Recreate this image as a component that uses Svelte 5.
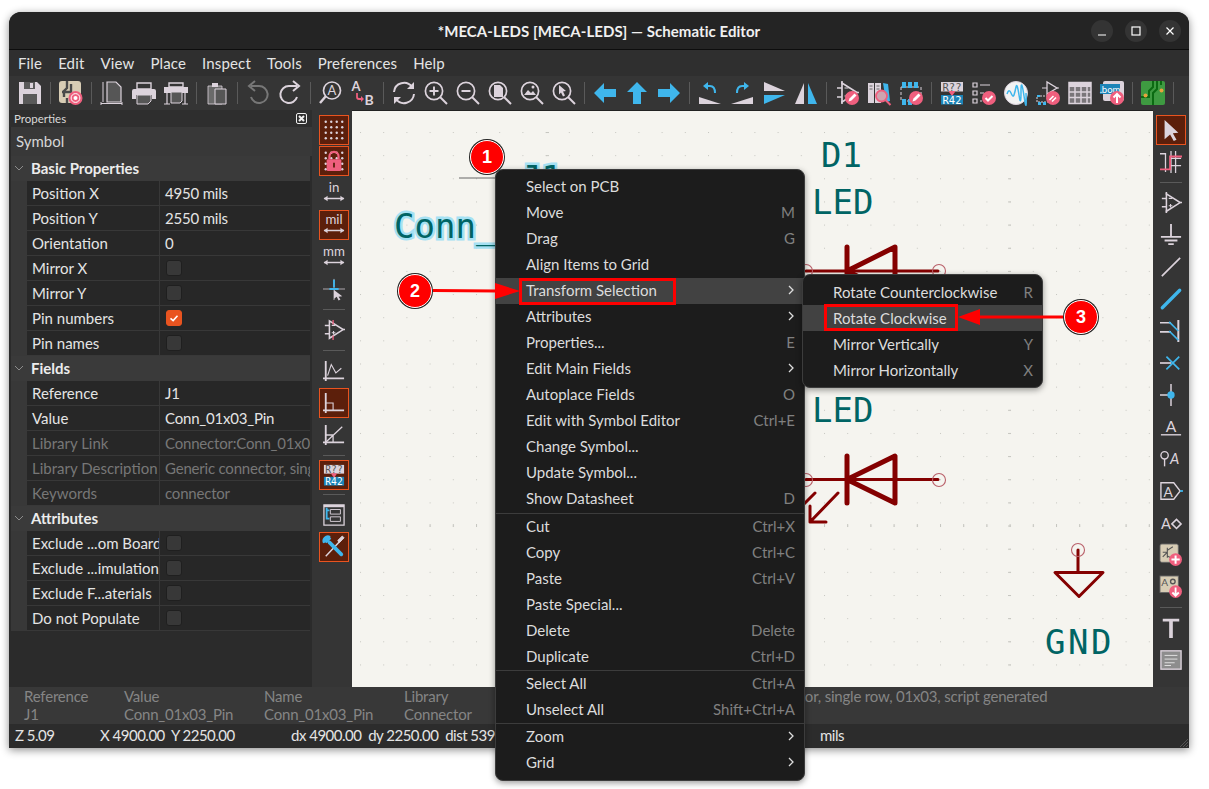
<script lang="ts">
  const L = "#dcd3dc";
  const B = "#3fb6ec";
  const P = "#ef5f7e";
  const G = "#565656";
  const SANS = "font-family='Lato,sans-serif'";

  // pink round badge used on the edit / check / add icons
  const badge = (inner: string, cx = 17, cy = 17, r = 7) =>
    `<circle cx="${cx}" cy="${cy}" r="${r}" fill="${P}"/>${inner}`;
  const pencil = `<path d="M13.5 20.5l1-3 5-5 2 2-5 5z" fill="#fff"/>`;
  const check = `<path d="M13.5 17l2.5 2.5 4.5-4.5" stroke="#fff" stroke-width="2" fill="none"/>`;
  const mag = (inner: string) =>
    `<circle cx="10" cy="10" r="8.6" fill="none" stroke="${L}" stroke-width="1.7"/><path d="M16 16l7 7" stroke="${L}" stroke-width="2"/>${inner}`;
  const opamp = (c = L) =>
    `<path d="M7 2v19l15-9.5z" fill="none" stroke="${c}" stroke-width="1.7"/><path d="M2 7h5M2 16h5M22 11.5h2M7 0v3M7 20v3" stroke="${c}" stroke-width="1.6"/><path d="M9.5 7h4M9.5 15h4M11.5 13v4" stroke="${c}" stroke-width="1.2"/>`;
  const units = (t: string) =>
    `<text x="12" y="11" text-anchor="middle" font-size="14.5" ${SANS} fill="${L}">${t}</text><path d="M1 18h22" stroke="${L}" stroke-width="1.6"/><path d="M5 15l-4 3 4 3zM19 15l4 3-4 3z" fill="${L}"/>`;
  const annotate = `<rect x="1" y="1" width="22" height="9.5" fill="${L}"/><text x="12" y="9.6" text-anchor="middle" font-size="10.5" font-family="DejaVu Sans Mono,monospace" fill="#555">R??</text><rect x="1" y="14" width="22" height="9.5" fill="#1b84b8"/><text x="12" y="22.8" text-anchor="middle" font-size="10.5" font-family="DejaVu Sans Mono,monospace" fill="#fff">R42</text><path d="M9 10h6v1l-3 4-3-4z" fill="${P}"/>`;
  const axes = `<path d="M3 1v22M0 20h23" stroke="${L}" stroke-width="2"/>`;
  const dotGrid = [3, 9, 15, 21]
    .flatMap(y => [3, 9, 15, 21].map(x => `<circle cx="${x}" cy="${y}" r="1.3" fill="${L}"/>`))
    .join("");

  const icons: Record<string, string> = {
    save: `<path d="M1 1h18l4 4v18H1z" fill="${L}"/><rect x="6" y="1" width="11" height="7" fill="#5a5a5a"/><rect x="12" y="2" width="3" height="5" fill="${L}"/><rect x="5" y="13" width="14" height="10" fill="#5a5a5a"/>`,
    setup: `<rect x="0" y="0" width="22" height="22" rx="3" fill="#d8cdb5"/><path d="M8 0v7L5 10v6M3 11h9M12 3v9M8 22v-5" stroke="#4a4a4a" stroke-width="2.4" fill="none"/><circle cx="16.5" cy="17" r="7" fill="${P}"/><circle cx="16.5" cy="17" r="4.4" fill="none" stroke="#fff" stroke-width="1"/><circle cx="16.5" cy="17" r="2" fill="#fff"/>`,
    page: `<path d="M7 1h9l5 5v15H7z" fill="${G}" stroke="${L}" stroke-width="1.2"/><path d="M3 1v20M1 22.5h21M1 21v3M22 21v3" stroke="${L}" stroke-width="1"/>`,
    print: `<path d="M5 2h14v6H5z" fill="none" stroke="${L}" stroke-width="1.4"/><path d="M2 8h20q2 0 2 2v8h-4v-4H4v4H0v-8q0-2 2-2z" fill="${L}"/><path d="M5 14h14v6l-3 3H5z" fill="${G}" stroke="${L}"/>`,
    plot: `<path d="M5 2h14v4H5z" fill="none" stroke="${L}" stroke-width="1.4"/><path d="M0 6h24v6H0z" fill="${L}"/><path d="M3 12v11M21 12v11M0 23h6M18 23h6" stroke="${L}" stroke-width="1.2"/><path d="M7 11h11v9l-2 2H7z" fill="${G}" stroke="${L}"/>`,
    paste: `<path d="M3 5h14v18H3z" fill="#6a6a6a" stroke="${L}" stroke-width=".8"/><rect x="7" y="2" width="6" height="4" fill="${L}"/><path d="M10 8h11v15H10z" fill="${G}" stroke="${L}"/>`,
    undo: `<path d="M5 5h8a8.5 8.5 0 1 1-8 11" fill="none" stroke="#777" stroke-width="2"/><path d="M9 0L3 5l6 5" fill="none" stroke="#777" stroke-width="2"/>`,
    redo: `<path d="M19 5h-8a8.5 8.5 0 1 0 8 11" fill="none" stroke="${L}" stroke-width="2"/><path d="M15 0l6 5-6 5" fill="none" stroke="${L}" stroke-width="2"/>`,
    find: `<circle cx="13" cy="9.5" r="8.5" fill="none" stroke="${L}" stroke-width="1.7"/><path d="M7 15l-6 7" stroke="${L}" stroke-width="2.4"/><text x="13" y="14" text-anchor="middle" font-size="13" ${SANS} fill="${L}">A</text>`,
    replace: `<text x="5" y="10" text-anchor="middle" font-size="13" font-weight="700" ${SANS} fill="${L}">A</text><text x="18" y="23.5" text-anchor="middle" font-size="14" font-weight="700" ${SANS} fill="${L}">B</text><path d="M6 12v4q0 2 2 2h3" stroke="${P}" stroke-width="1.8" fill="none"/><path d="M10 15l3 3-3 3z" fill="${P}"/>`,
    refresh: `<path d="M2 11a10 10 0 0 1 18-5" fill="none" stroke="${L}" stroke-width="2"/><path d="M22 1v7h-7z" fill="${L}"/><path d="M22 13a10 10 0 0 1-18 5" fill="none" stroke="${L}" stroke-width="2"/><path d="M2 23v-7h7z" fill="${L}"/>`,
    zoomin: mag(`<path d="M5.5 10h9M10 5.5v9" stroke="${L}" stroke-width="1.9"/>`),
    zoomout: mag(`<path d="M5.5 10h9" stroke="${L}" stroke-width="1.9"/>`),
    zoomfit: mag(`<path d="M6 4h6l3 3v9H6z" fill="${L}"/>`),
    zoomobj: mag(`<path d="M4 14l4-5 3 3 2-2 3 4z" fill="${L}"/><circle cx="13" cy="6" r="1.5" fill="${L}"/>`),
    zoomsel: mag(`<path d="M7 4l7 6-3 .5 2 4-2 1-2-4-2 2z" fill="${L}"/>`),
    left: `<path d="M1 12L11 2v6h12v8H11v6z" fill="${B}"/>`,
    up: `<path d="M12 1l10 10h-6v12H8V11H2z" fill="${B}"/>`,
    right: `<path d="M23 12L13 2v6H1v8h12v6z" fill="${B}"/>`,
    rotccw: `<path d="M1 16l22 7H1z" fill="${L}"/><path d="M9 5h3q5 0 5 7" fill="none" stroke="${B}" stroke-width="2"/><path d="M10 1L5 5l5 4z" fill="${B}"/>`,
    rotcw: `<path d="M23 16L1 23h22z" fill="${L}"/><path d="M15 5h-3q-5 0-5 7" fill="none" stroke="${B}" stroke-width="2"/><path d="M14 1l5 4-5 4z" fill="${B}"/>`,
    mirv: `<path d="M2 1l21 9H2z" fill="${L}"/><path d="M2 23l21-9H2z" fill="${B}"/>`,
    mirh: `<path d="M1 23l9-21v21z" fill="${L}"/><path d="M23 23L14 2v21z" fill="${B}"/>`,
    symedit: opamp() + badge(pencil),
    libview: `<path d="M1 2h6v20H1zM8 2h6v20H8z" fill="${L}"/><path d="M16 2l5 1 2 17-4 1z" fill="${B}"/><path d="M2.5 5h3M2.5 8h3M9.5 5h3M9.5 8h3" stroke="#666"/><circle cx="14.5" cy="15" r="5.5" fill="#cfa3b0" stroke="${P}" stroke-width="1.8"/><path d="M18.5 19l5 5" stroke="${P}" stroke-width="2"/>`,
    fpedit: `<path d="M2 6h20v14H2z" fill="none" stroke="${L}" stroke-dasharray="3 2"/><path d="M3 1h4v6H3zM9 1h4v6H9zM15 1h4v6h-4zM3 18h4v6H3zM9 18h4v6H9z" fill="${B}"/>` + badge(pencil),
    annotate,
    erc: `<path d="M1 2h4v4H1zM1 10h4v4H1zM1 18h4v4H1z" fill="none" stroke="${L}" stroke-width="1.2"/><path d="M8 4h10M8 12h4M8 20h2" stroke="${L}" stroke-width="1.2"/>` + badge(check),
    sim: `<circle cx="12" cy="12" r="11.5" fill="#f2f2f2" stroke="${L}"/><path d="M3 13q2-6 4-1t3 2 2-8 3 8 2-3 3 4 2-3" fill="none" stroke="${B}" stroke-width="1.5"/>`,
    netnav: `<path d="M11 1v12l10-6z" fill="none" stroke="${L}" stroke-width="1.3"/><path d="M6 7h5M21 7h2" stroke="${L}"/><path d="M1 15h12v6H1z" fill="none" stroke="${L}" stroke-dasharray="2 1"/><path d="M2 21h3v3H2zM7 21h3v3H7zM1 14h3v2H1z" fill="${B}"/>` + badge(`<path d="M13.5 19l4-4M16 20.5l4-4" stroke="#fff" stroke-width="1.6"/>`),
    table: `<path d="M1 1h22v22H1z" fill="#7a767a"/><path d="M1 1h22v5H1z" fill="${L}"/><path d="M1 1.5h22v21H1zM1 11h22M1 16.5h22M7 1v22M13 1v22M19 1v22" fill="none" stroke="${L}" stroke-width="1.5"/>`,
    bom: `<rect x="3" y="0" width="21" height="20" rx="2" fill="${L}"/><rect x="0" y="3" width="20" height="10" fill="#1b84b8"/><text x="10" y="11.5" text-anchor="middle" font-size="9.5" ${SANS} fill="#fff">.bom</text>` + badge(`<path d="M17 22v-9M13.5 16.5L17 13l3.5 3.5" stroke="#fff" stroke-width="2" fill="none"/>`),
    pcb: `<rect x="0" y="0" width="24" height="24" rx="2" fill="#3e9a41"/><path d="M12 0v6l-4 4v6H0M16 0v8l-4 4v12M20 0v4" stroke="#0b6a12" stroke-width="2" fill="none"/><circle cx="20.5" cy="9.5" r="2" fill="#e8a33d"/><circle cx="4.5" cy="14.5" r="2" fill="#e8a33d"/>`,

    grid: dotGrid,
    lock: dotGrid + `<path d="M7 10V7a5 5 0 0 1 10 0v3" fill="none" stroke="${P}" stroke-width="2.4"/><rect x="4" y="10" width="16" height="13" rx="1.5" fill="${P}"/><path d="M11 14h2v5h-2z" fill="#5c1f0b"/>`,
    in: units("in"),
    mil: units("mil"),
    mm: units("mm"),
    cursor: `<path d="M0 12h24M12 1v23" stroke="${L}" stroke-width=".8"/><path d="M11 2h2v8h-2zM7 11h10v2H7z" fill="${B}"/><path d="M12 13l9 7-4 .5 2 3-2 1-2-4-3 2z" fill="${L}"/>`,
    symbol: opamp().replace("M7 0v3M7 20v3", "") + `<path d="M11 1v5M11 18v5" stroke="${P}" stroke-width="1.4"/>`,
    graph: axes + `<path d="M5 17L9 5l5 9 6-5" fill="none" stroke="${L}" stroke-width="1.2"/>`,
    line90: axes + `<path d="M3 12h8v8" fill="none" stroke="${L}" stroke-width="1.2"/>`,
    line45: axes + `<path d="M3 12h8v8M3 20L21 3" fill="none" stroke="${L}" stroke-width="1.4"/>`,
    hier: `<path d="M1 1h22v22H1z" fill="none" stroke="${L}" stroke-width="1.4"/><path d="M1 1h22v2.5H1z" fill="${L}"/><path d="M4 4v13M4 7h3M4 16h3" stroke="${B}" stroke-width="2"/><path d="M8 6h11v5H8zM8 14h11v5H8z" fill="none" stroke="${L}"/>`,
    tools: `<path d="M20 4L3 22" stroke="${L}" stroke-width="1.6"/><path d="M18 7l5-5-2-2-5 5z" fill="${L}" stroke="${L}"/><path d="M7 7l13 13" stroke="${B}" stroke-width="4" stroke-linecap="round"/><path d="M8 0a6 6 0 0 0-8 8l3-1 1 1 5-5-1-1z" fill="${B}"/>`,

    pointer: `<path d="M5 1l15 14-6 .5 4 7-3 1.5-4-7-6 5z" fill="${L}"/>`,
    route: `<path d="M12 0v24M17 0v24M12 8h11M12 16h11" stroke="${L}" stroke-width="1.4"/><path d="M0 3h6v20" fill="none" stroke="${L}" stroke-width="1.4"/><path d="M0 20h11V6h13" fill="none" stroke="${P}" stroke-width="2"/>`,
    place: opamp(),
    gnd: `<path d="M12 0v14M1 14h22M5 18h14M9 22h6" stroke="${L}" stroke-width="2"/>`,
    line: `<path d="M2 22L22 2" stroke="${L}" stroke-width="1.8"/>`,
    bus: `<path d="M2.5 21.5l19-19" stroke="${B}" stroke-width="3.6" stroke-linecap="round"/>`,
    entry: `<path d="M20 0v24" stroke="${L}" stroke-width="2.2"/><path d="M0 3h12M0 13h12" stroke="${L}" stroke-width="1.8"/><path d="M10 2l10 10M10 12l10 10" stroke="${B}" stroke-width="1.8"/>`,
    noconn: `<path d="M0 12h12" stroke="${L}" stroke-width="1.8"/><path d="M7 5l14 14M21 5L7 19" stroke="${B}" stroke-width="1.8"/>`,
    junction: `<path d="M0 12h12M12 0v24" stroke="${L}" stroke-width="1.6"/><circle cx="12" cy="12" r="4" fill="${B}"/>`,
    label: `<text x="12" y="17" text-anchor="middle" font-size="17" ${SANS} fill="${L}">A</text><path d="M1 20.5h22" stroke="${L}" stroke-width="1.5"/>`,
    glabel: `<circle cx="5" cy="8" r="4" fill="none" stroke="${L}" stroke-width="1.5"/><path d="M5 12v8" stroke="${L}" stroke-width="1.5"/><text x="16" y="17" text-anchor="middle" font-size="16" font-style="italic" ${SANS} fill="${L}">A</text>`,
    hlabel: `<path d="M1 3h14l7 9-7 9H1z" fill="none" stroke="${L}" stroke-width="1.5"/><path d="M22 11h3v2h-3z" fill="${B}"/><text x="9" y="18" text-anchor="middle" font-size="15" ${SANS} fill="${L}">A</text>`,
    dirlabel: `<text x="6.5" y="18" text-anchor="middle" font-size="16" ${SANS} fill="${L}">A</text><path d="M13 13l5-5 5 5-5 5z" fill="none" stroke="${L}" stroke-width="1.7"/>`,
    sheet: `<rect x="0" y="0" width="20" height="20" rx="2" fill="#d8cdb5" stroke="#666"/><path d="M3 9h5M3 14l5-5M8 4v11M8 7l6-4M8 13l6 3" stroke="#555" stroke-width="1.2" fill="none"/>` + badge(`<path d="M17 12.5v9M12.5 17h9" stroke="#fff" stroke-width="2.2"/>`),
    impsheet: `<rect x="0" y="0" width="20" height="18" fill="#d8cdb5" stroke="#666"/><text x="5" y="11" text-anchor="middle" font-size="11" ${SANS} fill="#555">A</text><circle cx="14" cy="6" r="2.5" fill="none" stroke="#555" stroke-width="1.5"/>` + badge(`<path d="M17 12.5v9M13.5 18l3.5 3.5 3.5-3.5" stroke="#fff" stroke-width="2" fill="none"/>`),
    bigt: `<path d="M3 2h18v3h-7v18h-4V5H3z" fill="${L}"/>`,
    textbox: `<rect x="1" y="2" width="22" height="20" fill="#8d8d8d" stroke="${L}" stroke-width="1.5"/><path d="M5 7h14M5 11h14M5 15h11M5 18h7" stroke="#e6e6e6" stroke-width="1"/>`
  };

  const topTools = "save | setup | page print plot | paste | undo redo | find replace | refresh zoomin zoomout zoomfit zoomobj zoomsel | left up right | rotccw rotcw mirv mirh | symedit libview fpedit | annotate erc sim netnav table bom | pcb |".split(" ");
  const leftTools = "*grid *lock in *mil mm cursor | symbol | graph *line90 line45 | *annotate | hier *tools".split(" ");
  const rightTools = "*pointer route | place gnd line bus entry noconn junction label glabel hlabel dirlabel sheet impsheet | bigt textbox".split(" ");

  const menus = ["File", "Edit", "View", "Place", "Inspect", "Tools", "Preferences", "Help"];

  type Row = { k: string; v?: string; on?: boolean; off?: boolean; dim?: boolean };
  const sections: { title: string; rows: Row[] }[] = [
    {
      title: "Basic Properties",
      rows: [
        { k: "Position X", v: "4950 mils" },
        { k: "Position Y", v: "2550 mils" },
        { k: "Orientation", v: "0" },
        { k: "Mirror X", off: true },
        { k: "Mirror Y", off: true },
        { k: "Pin numbers", on: true },
        { k: "Pin names", off: true }
      ]
    },
    {
      title: "Fields",
      rows: [
        { k: "Reference", v: "J1" },
        { k: "Value", v: "Conn_01x03_Pin" },
        { k: "Library Link", v: "Connector:Conn_01x03_Pin", dim: true },
        { k: "Library Description", v: "Generic connector, single row", dim: true },
        { k: "Keywords", v: "connector", dim: true }
      ]
    },
    {
      title: "Attributes",
      rows: [
        { k: "Exclude ...om Board", off: true },
        { k: "Exclude ...imulation", off: true },
        { k: "Exclude F...aterials", off: true },
        { k: "Do not Populate", off: true }
      ]
    }
  ];

  const messages = [
    { w: 100, a: "Reference", b: "J1" },
    { w: 140, a: "Value", b: "Conn_01x03_Pin" },
    { w: 140, a: "Name", b: "Conn_01x03_Pin" },
    { w: 296, a: "Library", b: "Connector" },
    { w: 400, a: "Generic connector, single row, 01x03, script generated", b: "" }
  ];

  type Item = { t?: string; s?: string; sub?: boolean; hot?: boolean; sep?: boolean; wide?: boolean };
  const contextMenu: Item[] = [
    { t: "Select on PCB" },
    { t: "Move", s: "M" },
    { t: "Drag", s: "G" },
    { t: "Align Items to Grid" },
    { t: "Transform Selection", sub: true, hot: true },
    { t: "Attributes", sub: true },
    { t: "Properties...", s: "E" },
    { t: "Edit Main Fields", sub: true },
    { t: "Autoplace Fields", s: "O" },
    { t: "Edit with Symbol Editor", s: "Ctrl+E" },
    { t: "Change Symbol..." },
    { t: "Update Symbol..." },
    { t: "Show Datasheet", s: "D" },
    { sep: true, wide: true },
    { t: "Cut", s: "Ctrl+X" },
    { t: "Copy", s: "Ctrl+C" },
    { t: "Paste", s: "Ctrl+V" },
    { t: "Paste Special..." },
    { t: "Delete", s: "Delete" },
    { t: "Duplicate", s: "Ctrl+D" },
    { sep: true },
    { t: "Select All", s: "Ctrl+A" },
    { t: "Unselect All", s: "Shift+Ctrl+A" },
    { sep: true },
    { t: "Zoom", sub: true },
    { t: "Grid", sub: true }
  ];
  const subMenu: Item[] = [
    { t: "Rotate Counterclockwise", s: "R" },
    { t: "Rotate Clockwise", hot: true },
    { t: "Mirror Vertically", s: "Y" },
    { t: "Mirror Horizontally", s: "X" }
  ];
</script>

{#snippet icon(name: string)}
  <svg class="ic" viewBox="0 0 24 24">{@html icons[name]}</svg>
{/snippet}

{#snippet menuRows(items: Item[])}
  {#each items as it}
    {#if it.sep}
      <div class="msep" class:wide={it.wide}></div>
    {:else}
      <div class="mrow" class:hot={it.hot}>
        <span>{it.t}</span>
        {#if it.s}<span class="short">{it.s}</span>{/if}
        {#if it.sub}
          <svg class="chev" viewBox="0 0 8 10"><path d="M2 1l4 4-4 4" fill="none" stroke="#ddd" stroke-width="1.3" /></svg>
        {/if}
      </div>
    {/if}
  {/each}
{/snippet}

{#snippet vtool(name: string)}
  {#if name === "|"}
    <div class="hsep"></div>
  {:else}
    <div class="vbtn" class:active={name[0] === "*"}>{@render icon(name.replace("*", ""))}</div>
  {/if}
{/snippet}

<div class="page">
  <div class="window">
    <header class="titlebar">
      <span class="title">*MECA-LEDS [MECA-LEDS] — Schematic Editor</span>
      <div class="winctl">
        <span class="wbtn"><svg viewBox="0 0 22 22"><path d="M7 15h8" stroke="#fff" stroke-width="1.2" /></svg></span>
        <span class="wbtn"><svg viewBox="0 0 22 22"><rect x="7" y="7" width="8" height="8" fill="none" stroke="#fff" stroke-width="1.2" /></svg></span>
        <span class="wbtn"><svg viewBox="0 0 22 22"><path d="M7.5 7.5l7 7M14.5 7.5l-7 7" stroke="#fff" stroke-width="1.2" /></svg></span>
      </div>
    </header>

    <nav class="menubar">
      {#each menus as m}<span>{m}</span>{/each}
    </nav>

    <div class="toolbar">
      {#each topTools as t}
        {#if t === "|"}
          <div class="vsep"></div>
        {:else}
          <div class="hbtn">{@render icon(t)}</div>
        {/if}
      {/each}
    </div>

    <div class="main">
      <aside class="props">
        <div class="props-head">
          <span>Properties</span>
          <svg viewBox="0 0 11 11"><rect x=".5" y=".5" width="10" height="10" rx="1.5" fill="none" stroke="#eee" /><path d="M3 3l5 5M8 3l-5 5" stroke="#eee" stroke-width="2" /></svg>
        </div>
        <div class="props-type">Symbol</div>
        {#each sections as sec}
          <div class="sec">
            <svg viewBox="0 0 10 6"><path d="M1 1l4 4 4-4" fill="none" stroke="#8c8c8c" /></svg>
            <b>{sec.title}</b>
          </div>
          {#each sec.rows as r}
            <div class="prow" class:dim={r.dim}>
              <div class="pk">{r.k}</div>
              <div class="pv">
                {#if r.v}{r.v}{/if}
                {#if r.off}<i class="cb"></i>{/if}
                {#if r.on}
                  <i class="cb on"><svg viewBox="0 0 16 16"><path d="M4 8.5l3 2.5 5-5.5" fill="none" stroke="#fff" stroke-width="1.8" /></svg></i>
                {/if}
              </div>
            </div>
          {/each}
        {/each}
      </aside>

      <div class="lefttools">
        {#each leftTools as t}{@render vtool(t)}{/each}
      </div>

      <div class="canvas">
        <svg viewBox="352 111 801 576">
          <defs>
            <pattern id="dots" patternUnits="userSpaceOnUse" x="360" y="132" width="23.2" height="23.15">
              <rect width="1" height="1" fill="#c6c6c0" />
            </pattern>
            <pattern id="rowTick" patternUnits="userSpaceOnUse" x="360" y="524" width="23.2" height="3">
              <rect width="1" height="3" fill="#c6c6c0" />
            </pattern>
            <pattern id="colTick" patternUnits="userSpaceOnUse" x="546" y="132" width="3" height="23.15">
              <rect width="3" height="1" fill="#c6c6c0" />
            </pattern>
          </defs>
          <rect x="352" y="111" width="801" height="576" fill="url(#dots)" />
          <rect x="352" y="524" width="801" height="3" fill="url(#rowTick)" />
          <rect x="546" y="111" width="3" height="576" fill="url(#colTick)" />
          <rect x="1008" y="111" width="3" height="576" fill="url(#colTick)" />

          <path d="M459 178h40" stroke="#666" stroke-width="1" />
          <text class="sel" x="521" y="190">J1</text>
          <text class="sel" x="394" y="238">Conn_01x03_Pin</text>

          <text class="ref" x="821" y="167">D1</text>
          <text class="ref" x="812" y="214">LED</text>
          <text class="ref" x="812" y="422">LED</text>
          <text class="ref gnd" x="1045" y="654">GND</text>

          <g class="wire">
            <path class="lead" d="M806 271h132M806 479.5h132" />
            <path d="M847 247v48M895 247v48M895 247l-48 24 48 24z" />
            <path d="M847 456v47M895 456v47l-48-23.5z" />
            <path class="thin" d="M838 493l-28 29h16M810 522v-16M815 493l-12 12" />
            <path class="thin" d="M1078 550v22M1055 572.5h48l-24 24z" />
          </g>
          <g class="pin">
            <circle cx="806" cy="271" r="6.5" />
            <circle cx="939" cy="271" r="6.5" />
            <circle cx="806" cy="480" r="6.5" />
            <circle cx="939" cy="480" r="6.5" />
            <circle cx="1078" cy="550" r="6.5" />
          </g>
        </svg>
      </div>

      <div class="righttools">
        {#each rightTools as t}{@render vtool(t)}{/each}
      </div>
    </div>

    <div class="msgpanel">
      {#each messages as m}
        <div style="width:{m.w}px"><div>{m.a}</div><div>{m.b}</div></div>
      {/each}
    </div>

    <footer class="statusbar">
      <span class="st1">Z 5.09</span>
      <span class="st2">X 4900.00&nbsp; Y 2250.00</span>
      <span class="st3">dx 4900.00&nbsp; dy 2250.00&nbsp; dist 5398.15</span>
      <span class="st4">mils</span>
      <svg class="grip" viewBox="0 0 10 10"><path d="M9 1L1 9M9 4L4 9M9 7L7 9" stroke="#555" /></svg>
    </footer>
  </div>

  <div class="ctx main-menu">{@render menuRows(contextMenu)}</div>
  <div class="ctx sub-menu">{@render menuRows(subMenu)}</div>

  <!-- callouts drawn over the shot -->
  <div class="box box-a"></div>
  <div class="box box-b"></div>
  <svg class="arrows" viewBox="0 0 1209 789">
    <path d="M433 290.5L497 291" stroke="#f00" stroke-width="3" />
    <path d="M495 283l25 8-25 8z" fill="#f00" />
    <path d="M1063 317H978" stroke="#f00" stroke-width="3" />
    <path d="M980 309l-22 8 22 8z" fill="#f00" />
  </svg>
  <span class="num n1">1</span>
  <span class="num n2">2</span>
  <span class="num n3">3</span>
</div>

<style>
  :global(body) {
    background: #fff;
  }

  .page {
    position: relative;
    height: 789px;
    overflow: hidden;
    font-family: Lato, "Noto Sans", sans-serif;
    font-size: 15px;
    color: #e4e4e4;
  }

  .window {
    position: absolute;
    left: 9px;
    top: 12px;
    width: 1180px;
    height: 736px;
    display: flex;
    flex-direction: column;
    border-radius: 12px 12px 0 0;
    overflow: hidden;
    box-shadow: 0 2px 8px rgba(0, 0, 0, 0.45);
    background: #353535;
  }

  .titlebar {
    flex: 0 0 37px;
    position: relative;
    display: flex;
    align-items: center;
    justify-content: center;
    background: #242424;
    border-bottom: 1px solid #0d0d0d;
  }

  .title {
    font-weight: 700;
    color: #f0f0f0;
    letter-spacing: 0.05px;
  }

  .winctl {
    position: absolute;
    right: 8px;
    top: 8px;
    display: flex;
    gap: 12px;
  }

  .wbtn {
    width: 22px;
    height: 22px;
    border-radius: 50%;
    background: #343434;
  }

  .wbtn svg {
    display: block;
  }

  .menubar {
    flex: 0 0 26px;
    display: flex;
    align-items: center;
    padding-left: 1px;
    background: #2f2f2f;
    letter-spacing: 0.15px;
  }

  .menubar span {
    padding: 0 8px;
  }

  .toolbar {
    flex: 0 0 34px;
    display: flex;
    align-items: center;
    padding-left: 5px;
    background: #353535;
  }

  .hbtn {
    flex: 0 0 32px;
    height: 24px;
    display: flex;
    justify-content: center;
  }

  .vsep {
    flex: 0 0 1px;
    height: 22px;
    margin: 0 4px;
    background: #5a5a5a;
  }

  .ic {
    width: 24px;
    height: 24px;
    display: block;
    overflow: visible;
  }

  .main {
    flex: 1;
    display: flex;
    min-height: 0;
  }

  .props {
    flex: 0 0 303px;
    background: #2b2b2b;
    overflow: hidden;
  }

  .props-head {
    height: 17px;
    display: flex;
    align-items: center;
    justify-content: space-between;
    padding: 0 5px 1px;
    box-sizing: border-box;
    font-size: 11.5px;
    color: #d8d8d8;
    background: #2e2e2e;
  }

  .props-head svg {
    width: 11px;
    height: 11px;
  }

  .props-type {
    height: 29px;
    line-height: 28px;
    padding-left: 5px;
    margin-left: 2px;
    background: #383838;
    color: #d6d6d6;
  }

  .sec {
    height: 25px;
    box-sizing: border-box;
    padding-bottom: 2px;
    margin: 0 2px;
    display: flex;
    align-items: center;
    background: #3a3a3a;
  }

  .sec svg {
    width: 10px;
    height: 6px;
    margin: 0 7px 0 3px;
  }

  .sec b {
    color: #ececec;
  }

  .prow {
    height: 25px;
    margin: 0 2px;
    padding-left: 16px;
    display: flex;
    background: #383838;
  }

  .prow > div {
    background: #272727;
    height: 24px;
    line-height: 24px;
    white-space: nowrap;
    overflow: hidden;
    padding-left: 5px;
  }

  .pk {
    flex: 0 0 127px;
    margin-right: 1px;
  }

  .pv {
    flex: 1;
    display: flex;
    align-items: center;
    letter-spacing: -0.2px;
  }

  .dim > div {
    color: #777;
  }

  .cb {
    display: block;
    width: 14px;
    height: 14px;
    margin-left: 1px;
    border: 1px solid #1f1f1f;
    border-radius: 3px;
    background: #383838;
  }

  .cb.on {
    background: #e95420;
    border-color: #e95420;
  }

  .cb svg {
    display: block;
  }

  .lefttools {
    flex: 0 0 40px;
    box-sizing: border-box;
    padding: 4px 0 0 7px;
    background: #353535;
  }

  .righttools {
    flex: 0 0 36px;
    box-sizing: border-box;
    padding: 4px 0 0 3px;
    background: #353535;
  }

  .vbtn {
    width: 30px;
    height: 32px;
    display: flex;
    align-items: center;
    justify-content: center;
    box-sizing: border-box;
  }

  .vbtn .ic {
    width: 22px;
    height: 22px;
  }

  .vbtn.active {
    height: 30px;
    margin: 1px 0;
    border: 1px solid #e95420;
    background: #5c1f0b;
  }

  .hsep {
    width: 22px;
    height: 1px;
    margin: 4px;
    background: #5a5a5a;
  }

  .canvas {
    flex: 1;
    background: #f5f4ef;
    border-top: 1px solid #222;
    min-width: 0;
  }

  .canvas svg {
    display: block;
    width: 801px;
    height: 576px;
  }

  .canvas text {
    font-family: "DejaVu Sans Mono", monospace;
    font-size: 34px;
  }

  .ref {
    fill: #006464;
  }

  .gnd {
    letter-spacing: 2.5px;
  }

  .sel {
    fill: #006464;
    stroke: #a5e1f3;
    stroke-width: 5px;
    paint-order: stroke;
  }

  .wire path {
    fill: none;
    stroke: #840000;
    stroke-width: 5px;
    stroke-linecap: round;
    stroke-linejoin: round;
  }

  .wire .lead {
    stroke-width: 3px;
  }

  .wire .thin {
    stroke-width: 3px;
  }

  .pin circle {
    fill: none;
    stroke: #b9606a;
    stroke-width: 1.1px;
  }

  .msgpanel {
    flex: 0 0 37px;
    display: flex;
    box-sizing: border-box;
    padding-left: 15px;
    background: #383838;
    color: #858585;
    line-height: 18px;
    white-space: nowrap;
    letter-spacing: -0.2px;
  }

  .statusbar {
    flex: 0 0 24px;
    display: flex;
    align-items: center;
    box-sizing: border-box;
    padding-bottom: 2px;
    background: #2c2c2c;
    white-space: nowrap;
    letter-spacing: -0.5px;
    position: relative;
  }

  .st1 {
    width: 91px;
    padding-left: 6px;
    box-sizing: border-box;
  }

  .st2 {
    width: 191px;
  }

  .st3 {
    width: 529px;
  }

  .grip {
    position: absolute;
    right: 0;
    bottom: 0;
    width: 10px;
    height: 10px;
  }

  .ctx {
    position: absolute;
    box-sizing: border-box;
    background: #1c1c1c;
    border: 1px solid #3c3c3c;
    border-radius: 8px;
    padding: 4px 0;
    box-shadow: 0 2px 6px rgba(0, 0, 0, 0.4);
    white-space: nowrap;
    color: #dcdcdc;
  }

  .main-menu {
    left: 495px;
    top: 169px;
    width: 310px;
    height: 612px;
    z-index: 1;
  }

  .sub-menu {
    left: 802px;
    top: 274px;
    width: 241px;
    height: 114px;
    z-index: 2;
  }

  .mrow {
    height: 26px;
    display: flex;
    align-items: center;
    justify-content: space-between;
    padding: 0 9px 0 30px;
    position: relative;
  }

  .main-menu .mrow {
    box-sizing: border-box;
    padding-bottom: 2px;
  }

  .mrow.hot {
    background: #424242;
  }

  .short {
    color: #808080;
  }

  .chev {
    width: 8px;
    height: 10px;
  }

  .msep {
    height: 1px;
    background: #3c3c3c;
  }

  .msep.wide {
    margin-top: 1px;
  }

  .box {
    position: absolute;
    box-sizing: border-box;
    border: 3px solid #f00;
    z-index: 3;
  }

  .box-a {
    left: 519px;
    top: 278px;
    width: 157px;
    height: 27px;
  }

  .box-b {
    left: 824px;
    top: 304px;
    width: 134px;
    height: 27px;
  }

  .arrows {
    position: absolute;
    left: 0;
    top: 0;
    width: 1209px;
    height: 789px;
    z-index: 3;
    pointer-events: none;
  }

  .num {
    position: absolute;
    z-index: 4;
    width: 32px;
    height: 32px;
    border-radius: 50%;
    background: #f00;
    border: 1px solid #fff;
    box-shadow: 0 0 0 1px #222;
    color: #fff;
    font-family: "Liberation Sans", sans-serif;
    font-weight: 700;
    font-size: 18px;
    line-height: 32px;
    text-align: center;
  }

  .n1 {
    left: 470px;
    top: 140px;
  }

  .n2 {
    left: 398px;
    top: 274px;
  }

  .n3 {
    left: 1064px;
    top: 300px;
  }
</style>
